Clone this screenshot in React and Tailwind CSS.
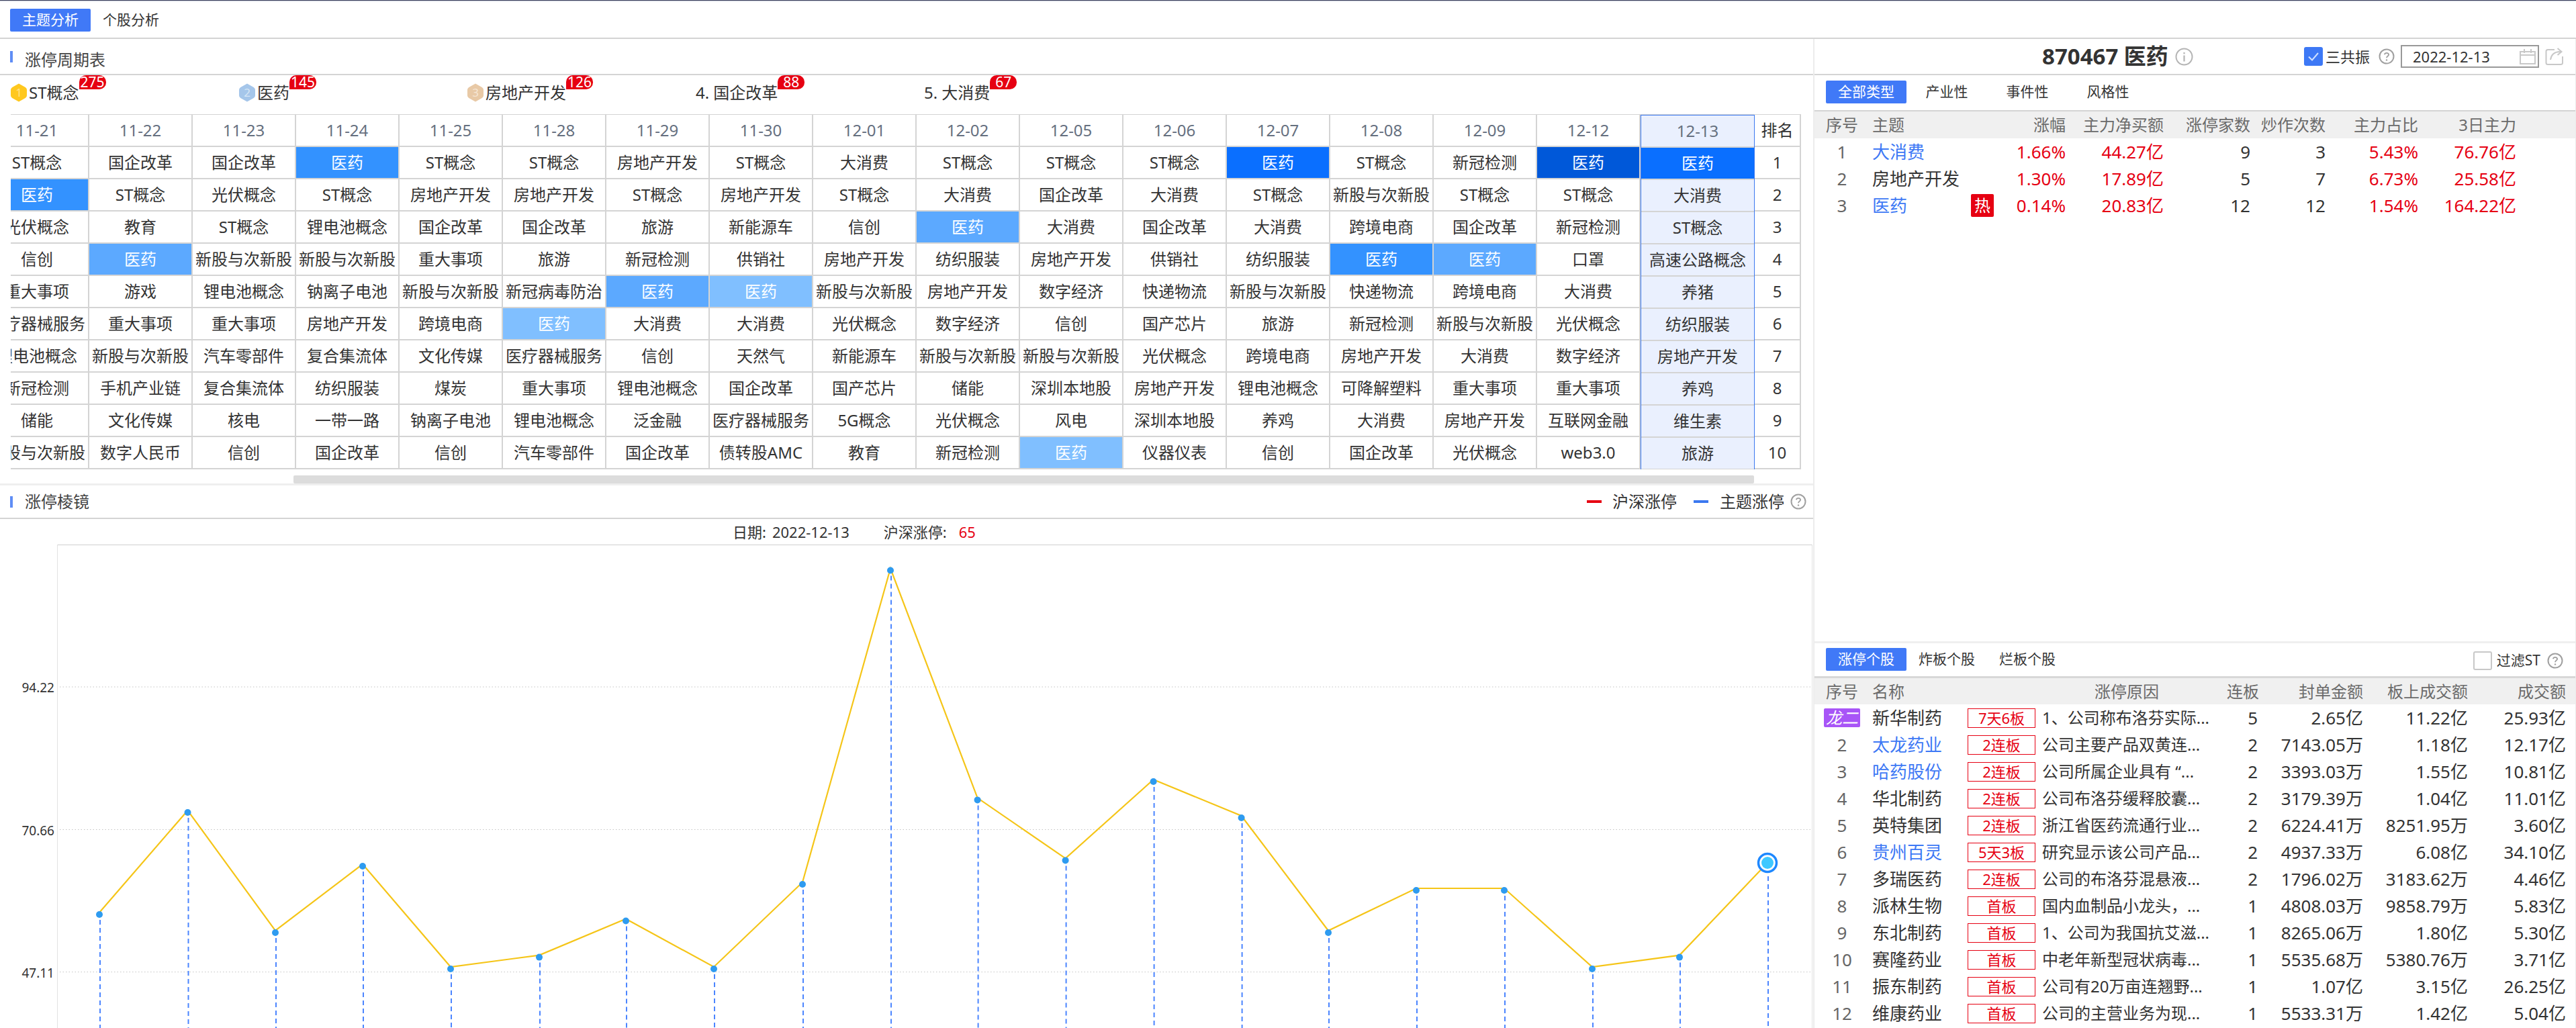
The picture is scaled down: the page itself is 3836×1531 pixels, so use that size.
const S1 = { t: "医药", s: 1 };
const S2 = { t: "医药", s: 2 };
const S3 = { t: "医药", s: 3 };
const S4 = { t: "医药", s: 4 };
const S5 = { t: "医药", s: 5 };

const fills = {
  1: "bg-[#0a6fff] text-white",
  2: "bg-[#3392ff] text-white",
  3: "bg-[#5ca9ff] text-white",
  4: "bg-[#80bfff] text-white",
  5: "bg-[#0058d9] text-white",
};

const dates = ["11-21", "11-22", "11-23", "11-24", "11-25", "11-28", "11-29", "11-30", "12-01", "12-02", "12-05", "12-06", "12-07", "12-08", "12-09", "12-12", "12-13"];

const rows = [
  ["ST概念", "国企改革", "国企改革", S2, "ST概念", "ST概念", "房地产开发", "ST概念", "大消费", "ST概念", "ST概念", "ST概念", S1, "ST概念", "新冠检测", S5, S1],
  [S2, "ST概念", "光伏概念", "ST概念", "房地产开发", "房地产开发", "ST概念", "房地产开发", "ST概念", "大消费", "国企改革", "大消费", "ST概念", "新股与次新股", "ST概念", "ST概念", "大消费"],
  ["光伏概念", "教育", "ST概念", "锂电池概念", "国企改革", "国企改革", "旅游", "新能源车", "信创", S3, "大消费", "国企改革", "大消费", "跨境电商", "国企改革", "新冠检测", "ST概念"],
  ["信创", S3, "新股与次新股", "新股与次新股", "重大事项", "旅游", "新冠检测", "供销社", "房地产开发", "纺织服装", "房地产开发", "供销社", "纺织服装", S2, S3, "口罩", "高速公路概念"],
  ["重大事项", "游戏", "锂电池概念", "钠离子电池", "新股与次新股", "新冠病毒防治", S3, S4, "新股与次新股", "房地产开发", "数字经济", "快递物流", "新股与次新股", "快递物流", "跨境电商", "大消费", "养猪"],
  ["医疗器械服务", "重大事项", "重大事项", "房地产开发", "跨境电商", S4, "大消费", "大消费", "光伏概念", "数字经济", "信创", "国产芯片", "旅游", "新冠检测", "新股与次新股", "光伏概念", "纺织服装"],
  ["锂电池概念", "新股与次新股", "汽车零部件", "复合集流体", "文化传媒", "医疗器械服务", "信创", "天然气", "新能源车", "新股与次新股", "新股与次新股", "光伏概念", "跨境电商", "房地产开发", "大消费", "数字经济", "房地产开发"],
  ["新冠检测", "手机产业链", "复合集流体", "纺织服装", "煤炭", "重大事项", "锂电池概念", "国企改革", "国产芯片", "储能", "深圳本地股", "房地产开发", "锂电池概念", "可降解塑料", "重大事项", "重大事项", "养鸡"],
  ["储能", "文化传媒", "核电", "一带一路", "钠离子电池", "锂电池概念", "泛金融", "医疗器械服务", "5G概念", "光伏概念", "风电", "深圳本地股", "养鸡", "大消费", "房地产开发", "互联网金融", "维生素"],
  ["新股与次新股", "数字人民币", "信创", "国企改革", "信创", "汽车零部件", "国企改革", "债转股AMC", "教育", "新冠检测", S4, "仪器仪表", "信创", "国企改革", "光伏概念", "web3.0", "旅游"],
];

const topRank = [
  { name: "ST概念", count: 275, medal: "#ffc81e", num: "#ffe38a" },
  { name: "医药", count: 145, medal: "#a5c6ea", num: "#d7e6f6" },
  { name: "房地产开发", count: 126, medal: "#e8c9a6", num: "#f6e6d4" },
  { name: "国企改革", count: 88, label: "4." },
  { name: "大消费", count: 67, label: "5." },
];

const themes = [
  ["1", "大消费", true, false, "1.66%", "44.27亿", "9", "3", "5.43%", "76.76亿"],
  ["2", "房地产开发", false, false, "1.30%", "17.89亿", "5", "7", "6.73%", "25.58亿"],
  ["3", "医药", true, true, "0.14%", "20.83亿", "12", "12", "1.54%", "164.22亿"],
];

const stocks = [
  ["1", "新华制药", false, "7天6板", "1、公司称布洛芬实际...", "5", "2.65亿", "11.22亿", "25.93亿"],
  ["2", "太龙药业", true, "2连板", "公司主要产品双黄连...", "2", "7143.05万", "1.18亿", "12.17亿"],
  ["3", "哈药股份", true, "2连板", "公司所属企业具有 “...", "2", "3393.03万", "1.55亿", "10.81亿"],
  ["4", "华北制药", false, "2连板", "公司布洛芬缓释胶囊...", "2", "3179.39万", "1.04亿", "11.01亿"],
  ["5", "英特集团", false, "2连板", "浙江省医药流通行业...", "2", "6224.41万", "8251.95万", "3.60亿"],
  ["6", "贵州百灵", true, "5天3板", "研究显示该公司产品...", "2", "4937.33万", "6.08亿", "34.10亿"],
  ["7", "多瑞医药", false, "2连板", "公司的布洛芬混悬液...", "2", "1796.02万", "3183.62万", "4.46亿"],
  ["8", "派林生物", false, "首板", "国内血制品小龙头，...", "1", "4808.03万", "9858.79万", "5.83亿"],
  ["9", "东北制药", false, "首板", "1、公司为我国抗艾滋...", "1", "8265.06万", "1.80亿", "5.30亿"],
  ["10", "赛隆药业", false, "首板", "中老年新型冠状病毒...", "1", "5535.68万", "5380.76万", "3.71亿"],
  ["11", "振东制药", false, "首板", "公司有20万亩连翘野...", "1", "1.07亿", "3.15亿", "26.25亿"],
  ["12", "维康药业", false, "首板", "公司的主营业务为现...", "1", "5533.31万", "1.42亿", "5.04亿"],
];

const chartX = [148, 279.5, 410, 540, 671, 803, 932, 1063, 1195, 1326, 1455.6, 1586.6, 1717.6, 1848.6, 1978, 2109, 2240, 2371, 2501, 2632];
const chartY = [551, 399, 578, 479, 632, 614.6, 560.5, 632, 506, 38.5, 380.4, 470.4, 353, 407, 578, 515, 515, 632, 614.6, 474];
const gridLines = [
  { y: 212, label: "94.22" },
  { y: 424.5, label: "70.66" },
  { y: 636.6, label: "47.11" },
];

function HelpIcon({ className }) {
  return (
    <svg className={className} viewBox="0 0 24 24">
      <circle cx="12" cy="12" r="10.5" fill="none" stroke="#a0a0a0" strokeWidth="2" />
      <path d="M8.8 9.3a3.3 3.3 0 0 1 6.4 0c0 2.2-3.2 2.4-3.2 5" fill="none" stroke="#a0a0a0" strokeWidth="1.8" />
      <circle cx="12" cy="17.4" r="1.2" fill="#a0a0a0" />
    </svg>
  );
}

function Medal({ color, num, n }) {
  return (
    <svg className="w-[24px] h-[28px] shrink-0" viewBox="0 0 24 28">
      <path d="M12 0.5 20 5Q24 7 24 10V18Q24 21 20 23L12 27.5 4 23Q0 21 0 18V10Q0 7 4 5Z" fill={color} />
      <text x="12" y="20" textAnchor="middle" fontSize="17" fill={num}>{n}</text>
    </svg>
  );
}

function SectionTitle({ children, textClass, right }) {
  return (
    <div className="flex items-center h-full pl-[15px]">
      <div className="w-[4px] h-[17px] bg-[#5f8df5]" />
      <div className={`ml-[18px] text-[24px] leading-[32px] text-[#444] ${textClass}`}>{children}</div>
      {right}
    </div>
  );
}

function TabBar({ items }) {
  return (
    <div className="flex">
      {items.map((t, i) => (
        <div key={t} className={`w-[120px] h-[34px] flex items-center justify-center text-[21px] rounded-[2px] ${i === 0 ? "bg-[#4079f7] text-white" : "text-[#333]"}`}>
          {t}
        </div>
      ))}
    </div>
  );
}

function DateColumn({ index, date }) {
  const selected = index === 16;
  return (
    <div className={selected ? "w-[170px] shrink-0 h-[529px] border border-[#3b78f0] bg-[#eaf0fe]" : "w-[154px] shrink-0 border-r-2 border-[#d4d4d4]"}>
      <div className="h-[48px] flex items-center justify-center border-b-2 border-[#d4d4d4] text-[24px] text-[#66707f]">{date}</div>
      {rows.map((row, r) => {
        const c = row[index];
        const fill = typeof c === "object" ? fills[c.s] : "";
        return (
          <div key={r} className={`h-[48px] flex items-center justify-center border-b-2 border-[#d4d4d4] text-[24px] whitespace-nowrap ${fill}`}>
            {typeof c === "object" ? c.t : c}
          </div>
        );
      })}
    </div>
  );
}

function CycleTable() {
  return (
    <div className="ml-[16px] w-[2666px] h-[529px] overflow-hidden border-t border-[#d4d4d4]">
      <div className="flex ml-[-37px] w-[2703px]">
        {dates.map((d, i) => (
          <DateColumn key={d} index={i} date={d} />
        ))}
        <div className="w-[69px] shrink-0 border-r-2 border-[#d4d4d4]">
          <div className="h-[48px] flex items-center justify-center border-b-2 border-[#d4d4d4] text-[24px]">排名</div>
          {rows.map((_, r) => (
            <div key={r} className="h-[48px] flex items-center justify-center border-b-2 border-[#d4d4d4] text-[24px]">{r + 1}</div>
          ))}
        </div>
      </div>
    </div>
  );
}

function Chart() {
  const line = chartX.map((x, i) => `${x},${i === 19 ? chartY[i] : chartY[i] - 3}`).join(" ");
  return (
    <svg className="block w-[2700px] h-[720px]" viewBox="0 0 2700 720">
      <path d="M85.5 720V0.5" fill="none" stroke="#e2e2e2" strokeWidth="1" />
      <path d="M2698.5 720V0.5" fill="none" stroke="#e2e2e2" strokeWidth="1" />
      <path d="M85.5 0.5H2698.5" fill="none" stroke="#d0d0d0" strokeWidth="1" />
      {gridLines.map((g) => (
        <g key={g.label}>
          <line x1="89" x2="2698" y1={g.y} y2={g.y} stroke="#c4c4c4" strokeWidth="1" strokeDasharray="1.5 3" />
          <text x="81" y={g.y + 8} textAnchor="end" fontSize="19" fill="#333">{g.label}</text>
        </g>
      ))}
      {chartX.map((x, i) => (
        <line key={x} x1={x + 1} x2={x + 1} y1={chartY[i] + 8} y2="720" stroke="#4b85ff" strokeWidth="2" strokeDasharray="7 5" />
      ))}
      <polyline points={line} fill="none" stroke="#f5c518" strokeWidth="2.2" />
      {chartX.slice(0, 19).map((x, i) => (
        <circle key={x} cx={x} cy={chartY[i]} r="5" fill="#2e9bf0" />
      ))}
      <circle cx="2632" cy="474" r="13.5" fill="#fff" stroke="#1e88ff" strokeWidth="3.5" />
      <circle cx="2632" cy="474" r="9" fill="#3fc8ff" />
    </svg>
  );
}

function LeftPanel() {
  return (
    <div className="w-[2700px] shrink-0">
      <div className="h-[54px] border-b-2 border-[#d4d4d4]">
        <SectionTitle textClass="mt-[10px]">涨停周期表</SectionTitle>
      </div>
      <div className="h-[58px] pl-[16px] flex">
        {topRank.map((item, i) => (
          <div key={item.name} className="w-[340px] pt-[12px]">
            <div className="relative inline-flex items-center h-[28px] text-[24px] whitespace-nowrap">
              {item.medal && <Medal color={item.medal} num={item.num} n={i + 1} />}
              <span className={item.medal ? "ml-[3px]" : ""}>
                {item.label && <span className="mr-[6px]">{item.label}</span>}
                {item.name}
              </span>
              <div className="absolute left-full top-[-12px] w-[40px] h-[21px] bg-[#e60012] rounded-[10px] rounded-bl-none text-white text-[21px] leading-[21px] text-center">
                {item.count}
              </div>
            </div>
          </div>
        ))}
      </div>
      <CycleTable />
      <div className="mt-[9px] h-[12px]">
        <div className="ml-[437px] w-[2175px] h-[12px] bg-[#dcdcdc] rounded-[2px]" />
      </div>
      <div className="h-[3px] bg-[#efefef]" />
      <div className="h-[50px] border-b-2 border-[#d4d4d4]">
        <SectionTitle
          right={
            <div className="ml-auto flex items-center text-[24px] pr-[10px] text-[#333]">
              <div className="w-[22px] h-[4px] bg-[#e60012]" />
              <span className="ml-[16px]">沪深涨停</span>
              <div className="ml-[25px] w-[22px] h-[4px] bg-[#3b78f0]" />
              <span className="ml-[17px]">主题涨停</span>
              <HelpIcon className="ml-[9px] w-[24px] h-[24px]" />
            </div>
          }
        >
          涨停棱镜
        </SectionTitle>
      </div>
      <div className="h-[38px] flex items-center pl-[1091px] text-[22px] text-[#333]">
        <span>日期:</span>
        <span className="ml-[9px]">2022-12-13</span>
        <span className="ml-[51px]">沪深涨停:</span>
        <span className="ml-[18px] text-[#e60012]">65</span>
      </div>
      <Chart />
    </div>
  );
}

function ThemeTable() {
  const widths = ["w-[96px]", "w-[146px]", "w-[129px]", "w-[112px]", "w-[138px]", "w-[146px]"];
  const head = ["涨幅", "主力净买额", "涨停家数", "炒作次数", "主力占比", "3日主力"];
  return (
    <div>
      <div className="h-[40px] flex items-center bg-[#f0f0f0] text-[24px] text-[#6b6b6b] whitespace-nowrap">
        <div className="w-[82px] text-center">序号</div>
        <div className="w-[196px] pl-[4px]">主题</div>
        {head.map((h, i) => (
          <div key={h} className={`${widths[i]} text-right`}>{h}</div>
        ))}
      </div>
      {themes.map((r) => {
        const red = (i) => i === 0 || i === 1 || i === 4 || i === 5;
        return (
          <div key={r[0]} className="h-[40px] flex items-center text-[26px] whitespace-nowrap">
            <div className="w-[82px] text-center text-[#666]">{r[0]}</div>
            <div className={`w-[196px] pl-[4px] pr-[11px] flex items-center justify-between ${r[2] ? "text-[#3d78f5]" : ""}`}>
              <span>{r[1]}</span>
              {r[3] && <span className="w-[34px] h-[34px] flex items-center justify-center bg-[#e60012] rounded-[2px] text-white text-[24px]">热</span>}
            </div>
            {r.slice(4).map((v, i) => (
              <div key={i} className={`${widths[i]} text-right ${red(i) ? "text-[#e60012]" : ""}`}>{v}</div>
            ))}
          </div>
        );
      })}
    </div>
  );
}

function StockTable() {
  return (
    <div>
      <div className="h-[39px] flex items-center bg-[#f0f0f0] text-[24px] text-[#6b6b6b] whitespace-nowrap">
        <div className="w-[82px] text-center">序号</div>
        <div className="w-[247px] pl-[4px]">名称</div>
        <div className="ml-[10px] w-[252px] text-center">涨停原因</div>
        <div className="w-[71px] text-right">连板</div>
        <div className="w-[155px] text-right">封单金额</div>
        <div className="w-[156px] text-right">板上成交额</div>
        <div className="w-[146px] text-right">成交额</div>
      </div>
      {stocks.map((r) => (
        <div key={r[0]} className="h-[40px] flex items-center text-[26px] whitespace-nowrap">
          <div className="w-[82px] flex justify-center text-[#666]">
            {r[0] === "1" ? (
              <span className="w-[54px] h-[28px] flex items-center justify-center bg-[#a855f7] rounded-[2px] text-white text-[24px] italic">龙二</span>
            ) : (
              r[0]
            )}
          </div>
          <div className={`w-[146px] pl-[4px] ${r[2] ? "text-[#3d78f5]" : ""}`}>{r[1]}</div>
          <div className="w-[101px] h-[29px] flex items-center justify-center border border-[#e60012] text-[#e60012] text-[22px]">{r[3]}</div>
          <div className="ml-[10px] w-[252px] text-[24px]">{r[4]}</div>
          <div className="w-[71px] text-right pr-[2px]">{r[5]}</div>
          <div className="w-[155px] text-right">{r[6]}</div>
          <div className="w-[156px] text-right">{r[7]}</div>
          <div className="w-[146px] text-right">{r[8]}</div>
        </div>
      ))}
    </div>
  );
}

function RightPanel() {
  return (
    <div className="w-[1136px] shrink-0 border-l-2 border-r border-[#ececec]">
      <div className="h-[54px] flex items-center border-b-2 border-[#d4d4d4]">
        <div className="ml-[339px] text-[33px] font-bold leading-[44px] whitespace-nowrap">870467 医药</div>
        <svg className="ml-[10px] w-[27px] h-[27px]" viewBox="0 0 27 27">
          <circle cx="13.5" cy="13.5" r="12" fill="none" stroke="#b4b4b4" strokeWidth="2" />
          <rect x="12.4" y="11.5" width="2.2" height="9" fill="#b4b4b4" />
          <rect x="12.4" y="7" width="2.2" height="2.4" fill="#b4b4b4" />
        </svg>
        <div className="ml-auto mr-[17px] flex items-center">
          <div className="w-[28px] h-[28px] flex items-center justify-center bg-[#3d78f5] rounded-[3px]">
            <svg className="w-[20px] h-[20px]" viewBox="0 0 20 20">
              <path d="M3 10.5 8 15.5 17 5" fill="none" stroke="#cfe0ff" strokeWidth="2" />
            </svg>
          </div>
          <span className="ml-[4px] text-[22px]">三共振</span>
          <HelpIcon className="ml-[13px] w-[24px] h-[24px]" />
          <div className="ml-[9px] w-[206px] h-[34px] flex items-center justify-between border-2 border-[#999] pl-[16px] pr-[3px] text-[22px]">
            <span>2022-12-13</span>
            <svg className="w-[24px] h-[24px]" viewBox="0 0 24 24">
              <path d="M1 5H23V23H1ZM1 10H23M7 1V7M17 1V7" fill="none" stroke="#c8c8c8" strokeWidth="2" />
            </svg>
          </div>
          <svg className="ml-[9px] w-[28px] h-[28px]" viewBox="0 0 28 28">
            <path d="M14 4H4Q1.5 4 1.5 6.5V23.5Q1.5 26 4 26H23Q26 26 26 23.5V14" fill="none" stroke="#c8c8c8" strokeWidth="2" />
            <path d="M8 19C9 11 14 7 23 7M18.5 2 24.5 7 18.5 12" fill="none" stroke="#c8c8c8" strokeWidth="2" />
          </svg>
        </div>
      </div>
      <div className="h-[54px] pt-[8px] pl-[17px] border-b-2 border-[#d4d4d4]">
        <TabBar items={["全部类型", "产业性", "事件性", "风格性"]} />
      </div>
      <div className="h-[789px]">
        <ThemeTable />
      </div>
      <div className="h-[3px] bg-[#efefef]" />
      <div className="h-[52px] pt-[7px] pl-[17px] pr-[18px] flex items-start justify-between border-b-[3px] border-[#d8d8d8]">
        <TabBar items={["涨停个股", "炸板个股", "烂板个股"]} />
        <div className="flex items-center mt-[3px] text-[21px]">
          <div className="w-[28px] h-[28px] bg-white border-2 border-[#c8c8c8] rounded-[3px]" />
          <span className="ml-[7px]">过滤ST</span>
          <HelpIcon className="ml-[10px] w-[24px] h-[24px]" />
        </div>
      </div>
      <StockTable />
    </div>
  );
}

export default function App() {
  return (
    <div className="w-[3836px] h-[1531px] overflow-hidden bg-white text-[#333] font-['Noto_Sans','Noto_Sans_CJK_SC',sans-serif]">
      <div className="h-[3px] bg-[#eceef2] border-t border-[#2b3050]" />
      <div className="h-[55px] pt-[10px] pl-[15px] border-b-2 border-[#d4d4d4]">
        <TabBar items={["主题分析", "个股分析"]} />
      </div>
      <div className="flex">
        <LeftPanel />
        <RightPanel />
      </div>
    </div>
  );
}
